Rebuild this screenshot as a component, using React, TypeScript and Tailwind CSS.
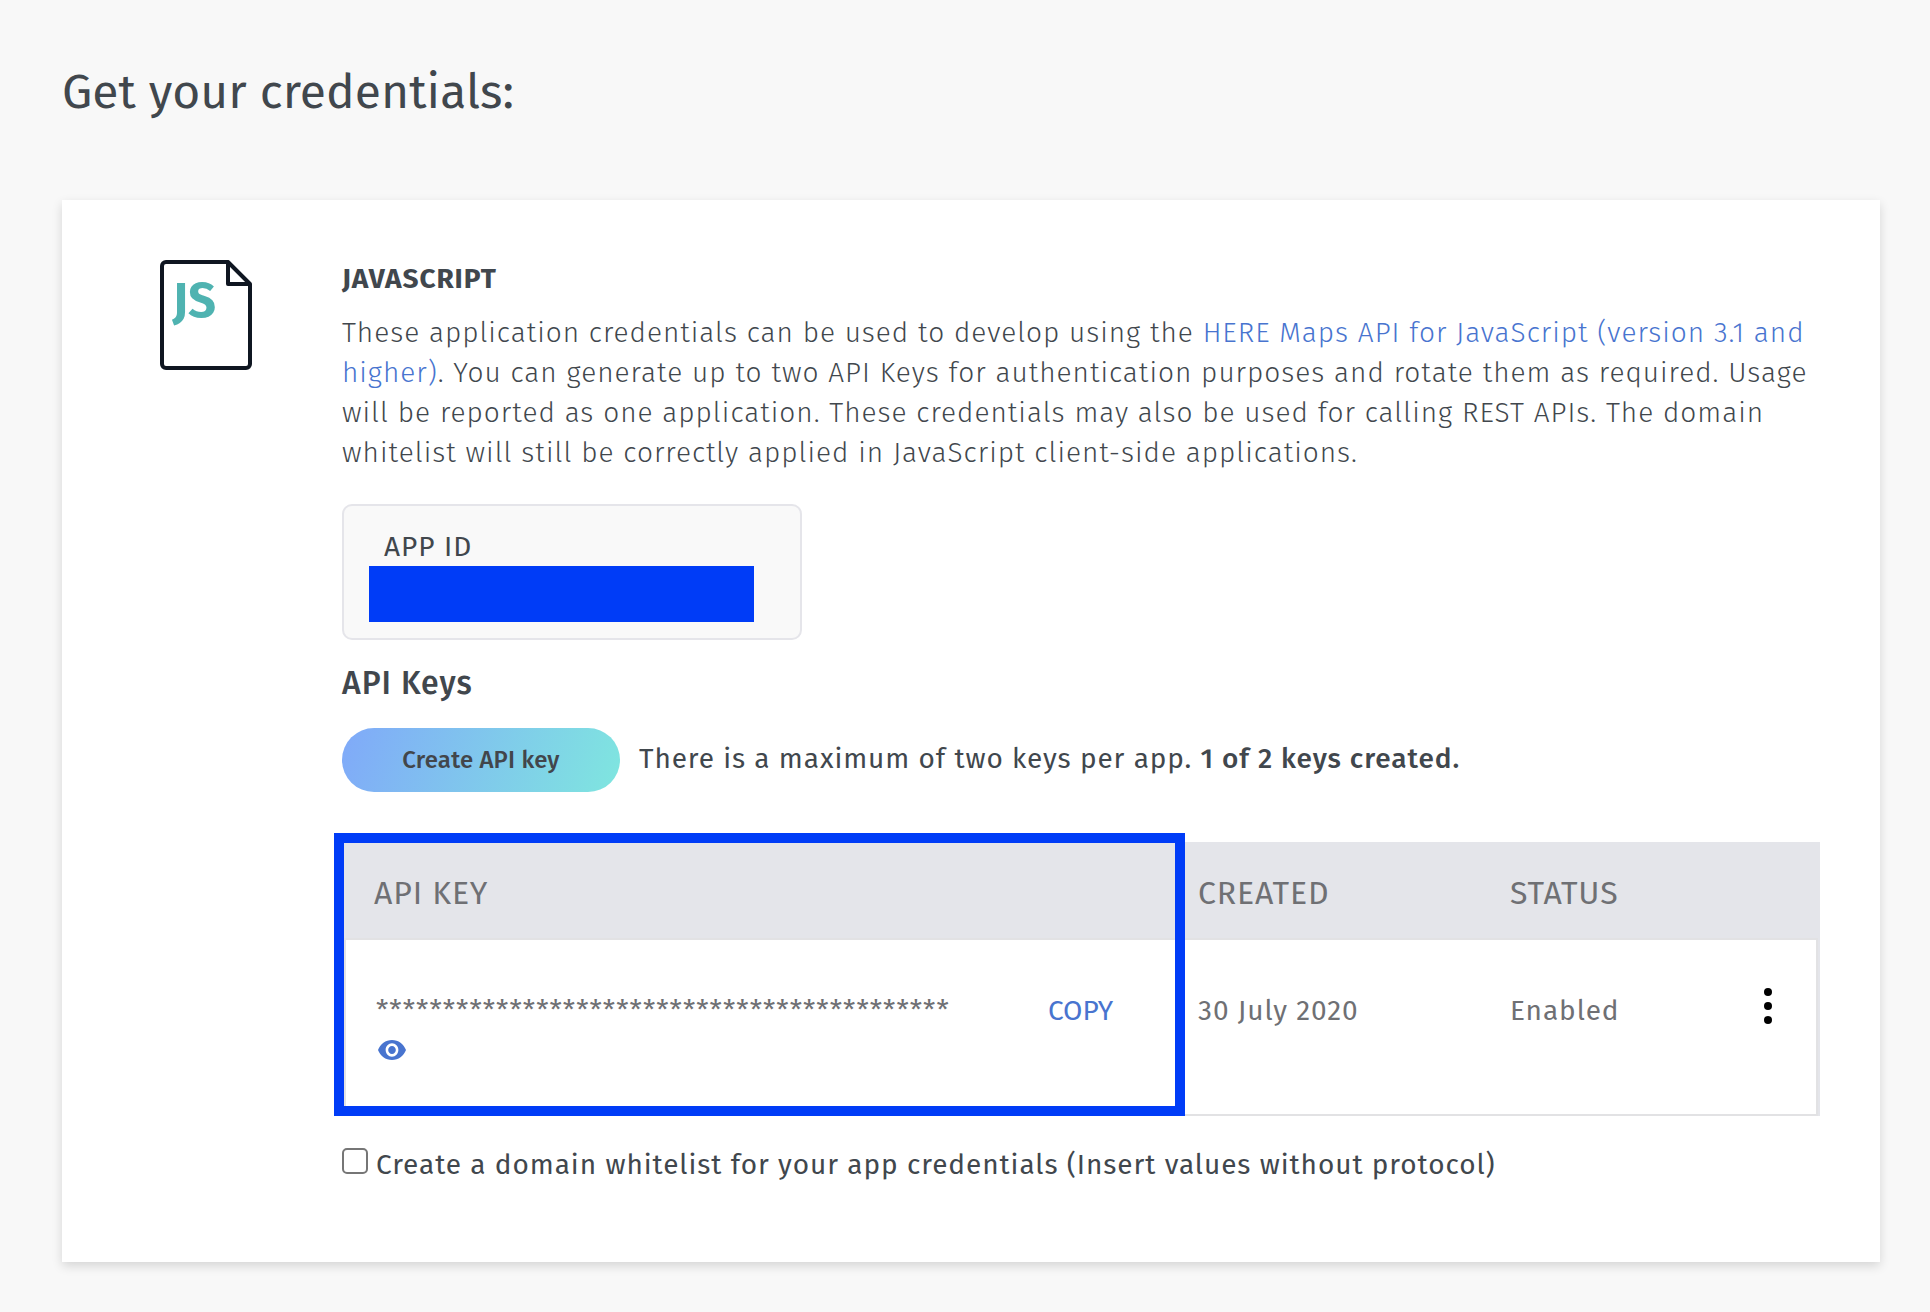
const header = 'pt-[31px] text-[32px] leading-10 tracking-[0.85px]';
const cell = 'pt-[51px] text-[28px] leading-10 tracking-[0.92px]';

export default function App() {
  return (
    <main className="h-[1312px] w-[1930px] overflow-hidden bg-[#f8f8f8] pl-[62px] pt-[62px] font-['Fira_Sans','Noto_Sans',sans-serif] text-[#41474d]">
      <h1 className="text-[48px] leading-[60px] tracking-[0.06px]">Get your credentials:</h1>

      <section className="mt-[78px] flex h-[1062px] w-[1818px] bg-white pl-[98px] pt-[59px] shadow-[0_4px_10px_rgba(0,0,0,0.14)]">
        <div className="mt-px w-[182px]">
          <svg width="92" height="110" viewBox="0 0 92 110" fill="none" stroke="#0f1621" strokeWidth="4" strokeLinejoin="round">
            <path d="M68 2H6a4 4 0 0 0-4 4v98a4 4 0 0 0 4 4h80a4 4 0 0 0 4-4V24L68 2v22h22" />
            <text x="12.5" y="57" fill="#4fb3b1" stroke="none" fontSize="49" fontWeight="700" fontFamily="'Fira Sans','Noto Sans',sans-serif">JS</text>
          </svg>
        </div>

        <div className="w-[1478px]">
          <h2 className="text-[28px] font-bold leading-10 tracking-[0.9px]">JAVASCRIPT</h2>
          <p className="mt-[14px] whitespace-nowrap text-[28px] font-light leading-10 tracking-[1px]">
            <span className="tracking-[0.98px]">These application credentials can be used to develop using the </span>
            <a className="tracking-[0.98px] text-[#4874cf]">HERE Maps API for JavaScript (version 3.1 and<br />higher)</a>
            . You can generate up to two API Keys for authentication purposes and rotate them as required. Usage<br />
            will be reported as one application. These credentials may also be used for calling REST APIs. The domain<br />
            whitelist will still be correctly applied in JavaScript client-side applications.
          </p>

          <div className="mt-[31px] h-[136px] w-[460px] rounded-[10px] border-2 border-[#e5e5ea] bg-[#f9f9f9] pl-[25px] pt-[21px]">
            <div className="pl-[15px] text-[28px] leading-[39px] tracking-[1px]">APP ID</div>
            <div className="h-[56px] w-[385px] bg-[#003cf7]" />
          </div>

          <h3 className="mt-[23px] text-[32px] font-medium leading-10 tracking-[1px]">API Keys</h3>

          <div className="mt-[25px] flex h-16 gap-[19px]">
            <button className="w-[278px] rounded-full bg-[linear-gradient(110deg,#80a9f9,#7fe6df)] text-[24px] font-medium leading-[64px] tracking-[0.18px] text-[#42464b]">Create API key</button>
            <p className="whitespace-pre text-[28px] leading-[62px] tracking-[0.91px]">There is a maximum of two keys per app. <b className="font-medium tracking-[0.94px]">1 of 2 keys created.</b></p>
          </div>

          <div className="relative mt-[50px] h-[274px] border-x-2 border-[#e4e5ea] text-[#6f7074]">
            <div className="grid h-[96px] grid-cols-[824px_312px_1fr] bg-[#e4e5ea] pl-[30px]">
              <div className={header}>API KEY</div>
              <div className={header}>CREATED</div>
              <div className={header}>STATUS</div>
            </div>
            <div className="grid h-[178px] grid-cols-[672px_150px_312px_250px_1fr] border-2 border-[#e2e2e4] bg-white pl-[30px]">
              <div className={cell}>
                <span className="tracking-[0.94px]">*******************************************</span>
                <svg className="ml-0.5 mt-[9px]" width="28" height="20" viewBox="1 4.5 22 15" preserveAspectRatio="none" fill="#4874cf">
                  <path d="M12 4.5C7 4.5 2.73 7.61 1 12c1.73 4.39 6 7.5 11 7.5s9.27-3.11 11-7.5c-1.73-4.39-6-7.5-11-7.5zM12 17c-2.76 0-5-2.24-5-5s2.24-5 5-5 5 2.24 5 5-2.24 5-5 5zm0-8c-1.66 0-3 1.34-3 3s1.34 3 3 3 3-1.34 3-3-1.34-3-3-3z" />
                </svg>
              </div>
              <div className="pt-[51px] text-[28px] leading-10 text-[#4874cf]">COPY</div>
              <div className={cell}>30 July 2020</div>
              <div className={cell}>Enabled</div>
              <svg className="mt-12" width="16" height="36" viewBox="0 0 16 36" fill="#000">
                <circle cx="8" cy="4" r="4" />
                <circle cx="8" cy="18" r="4" />
                <circle cx="8" cy="32" r="4" />
              </svg>
            </div>
            <div className="absolute -left-[10px] -top-[9px] h-[283px] w-[851px] border-10 border-[#003cf7]" />
          </div>

          <label className="mt-[29px] flex gap-2 text-[28px] leading-10 tracking-[0.93px]">
            <input type="checkbox" className="mt-[3px] size-[26px] appearance-none rounded-[5px] border-2 border-[#767676] bg-white" />
            Create a domain whitelist for your app credentials (Insert values without protocol)
          </label>
        </div>
      </section>
    </main>
  );
}
